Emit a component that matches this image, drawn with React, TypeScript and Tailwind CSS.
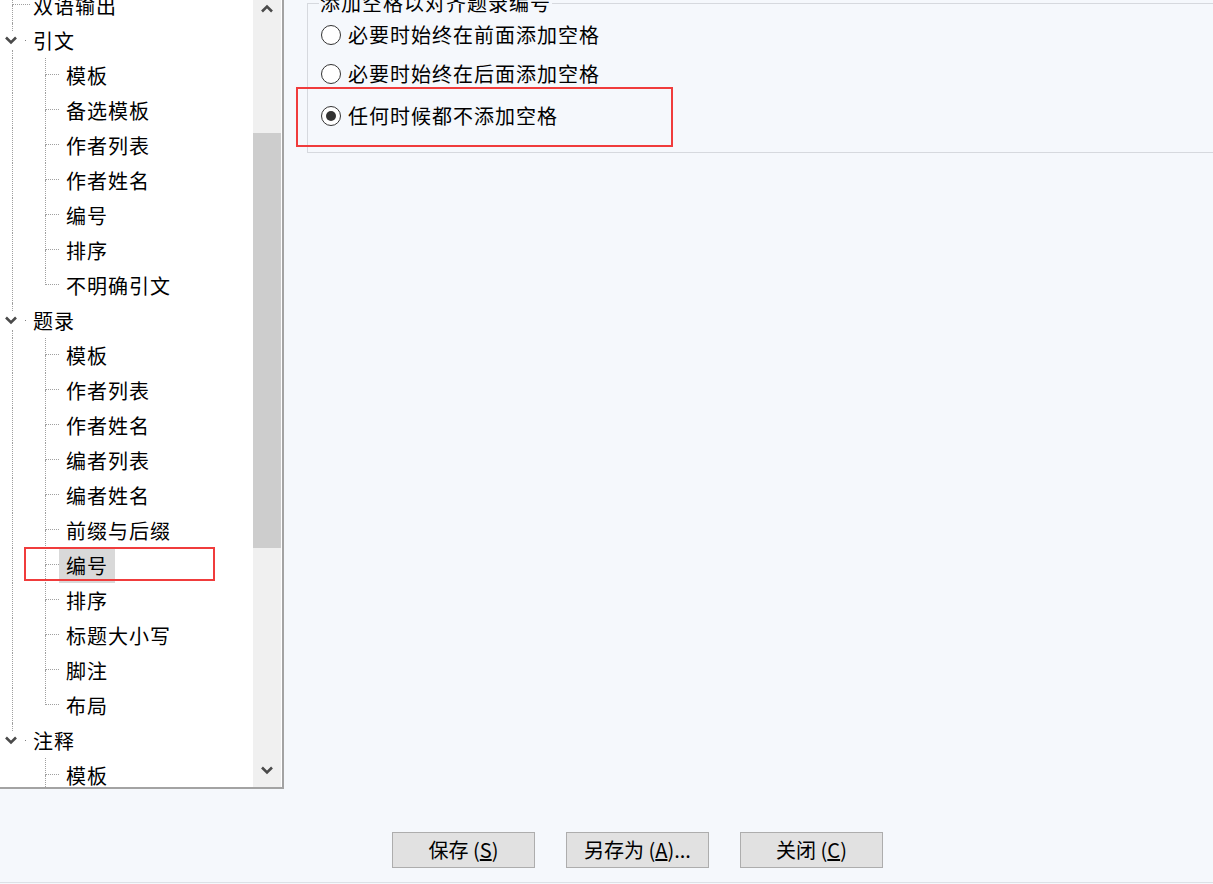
import React from "react";

type TreeNode = { label: string; children?: string[] };

const nodes: TreeNode[] = [
  { label: "双语输出" },
  {
    label: "引文",
    children: ["模板", "备选模板", "作者列表", "作者姓名", "编号", "排序", "不明确引文"],
  },
  {
    label: "题录",
    children: [
      "模板",
      "作者列表",
      "作者姓名",
      "编者列表",
      "编者姓名",
      "前缀与后缀",
      "编号",
      "排序",
      "标题大小写",
      "脚注",
      "布局",
    ],
  },
  { label: "注释", children: ["模板", "作者列表", "作者姓名"] },
];

// selected entry: 题录 > 编号
const SELECTED = { parent: "题录", child: 6 };

const Chevron = ({ up = false }: { up?: boolean }) => (
  <svg width="14" height="9" viewBox="0 0 14 9" className="shrink-0">
    <path
      d={up ? "M2 7.5 7 2.5l5 5" : "M2 1.5 7 6.5l5-5"}
      fill="none"
      stroke="#4a4a4a"
      strokeWidth="2.6"
    />
  </svg>
);

const LeafRow = ({ label, last }: { label: string; last: boolean }) => (
  <div className="flex h-[35px]">
    <div className="w-[12px] shrink-0" />
    <div className="flex w-[21px] shrink-0 flex-col">
      <div className="h-[17px] w-[18px] border-b border-l border-dotted border-[#a0a0a0]" />
      {!last && <div className="flex-1 border-l border-dotted border-[#a0a0a0]" />}
    </div>
    <span className="flex items-center">{label}</span>
  </div>
);

const HeaderRow = ({ label, last }: { label: string; last: boolean }) => (
  <div className="flex h-[35px]">
    <div className="w-[12px] shrink-0" />
    <div className="flex w-[21px] shrink-0 flex-col">
      <div className="h-[8px] border-l border-dotted border-[#a0a0a0]" />
      <div className="-ml-[8px] flex h-[19px] items-center">
        <Chevron />
        <span className="ml-[7px] h-[1px] w-[1px] bg-[#808080]" />
      </div>
      {!last && <div className="flex-1 border-l border-dotted border-[#a0a0a0]" />}
    </div>
    <span className="flex items-center">{label}</span>
  </div>
);

const ChildRow = ({
  label,
  parentLast,
  last,
  selected,
}: {
  label: string;
  parentLast: boolean;
  last: boolean;
  selected: boolean;
}) => (
  <div className="flex h-[35px]">
    <div className="w-[12px] shrink-0" />
    <div
      className={
        parentLast
          ? "w-[33px] shrink-0"
          : "w-[33px] shrink-0 border-l border-dotted border-[#a0a0a0]"
      }
    />
    <div className="flex w-[14px] shrink-0 flex-col">
      <div className="h-[17px] border-b border-l border-dotted border-[#a0a0a0]" />
      {!last && <div className="flex-1 border-l border-dotted border-[#a0a0a0]" />}
    </div>
    <span
      className={
        selected
          ? "mt-[1px] flex h-[34px] items-center bg-[#d9d9d9] px-[7px]"
          : "flex items-center px-[7px]"
      }
    >
      {label}
    </span>
  </div>
);

const Radio = ({ label, checked = false }: { label: string; checked?: boolean }) => (
  <div className="flex h-[28px] items-center gap-[7px]">
    <span className="flex h-[20px] w-[20px] items-center justify-center rounded-full border-[1.5px] border-[#333] bg-white">
      {checked && <span className="h-[10px] w-[10px] rounded-full bg-[#333]" />}
    </span>
    <span>{label}</span>
  </div>
);

export default function App() {
  return (
    <div className="relative h-[884px] w-[1213px] overflow-hidden bg-[#f5f8fc] font-['Noto_Sans_CJK_SC','Microsoft_YaHei',sans-serif] text-[20px] leading-none tracking-[1px] text-black">
      <div className="flex h-[789px]">
        {/* tree panel */}
        <div className="flex w-[284px] shrink-0 border-b-2 border-r-2 border-[#a3a3a3] bg-white">
          <div className="w-[253px] shrink-0 overflow-hidden">
            <div className="-mt-[12px]">
              {nodes.map((n, i) => {
                const last = i === nodes.length - 1;
                if (!n.children) return <LeafRow key={n.label} label={n.label} last={last} />;
                return (
                  <div key={n.label}>
                    <HeaderRow label={n.label} last={last} />
                    {n.children.map((c, j) => (
                      <ChildRow
                        key={n.label + c}
                        label={c}
                        parentLast={last}
                        last={j === n.children!.length - 1}
                        selected={n.label === SELECTED.parent && j === SELECTED.child}
                      />
                    ))}
                  </div>
                );
              })}
            </div>
          </div>
          {/* scrollbar */}
          <div className="flex w-[28px] shrink-0 flex-col bg-[#f0f0f0]">
            <div className="flex h-[17px] items-center justify-center">
              <Chevron up />
            </div>
            <div className="h-[116px]" />
            <div className="h-[415px] bg-[#cdcdcd]" />
            <div className="flex-1" />
            <div className="flex h-[34px] items-center justify-center">
              <Chevron />
            </div>
          </div>
        </div>

        {/* settings */}
        <div className="flex-1 pl-[23px] pt-[3px]">
          <div className="h-[150px] w-[920px] border border-[#d6d9de]">
            <div className="-mt-[13px] ml-[11px] w-fit bg-[#f5f8fc] px-[1px] leading-[24px]">
              添加空格以对齐题录编号
            </div>
            <div className="flex flex-col pl-[13px]">
              <div className="mt-[6px]">
                <Radio label="必要时始终在前面添加空格" />
              </div>
              <div className="mt-[11px]">
                <Radio label="必要时始终在后面添加空格" />
              </div>
              <div className="mt-[14px]">
                <Radio label="任何时候都不添加空格" checked />
              </div>
            </div>
          </div>
        </div>
      </div>

      {/* buttons */}
      <div className="flex h-[93px] gap-[31px] pl-[392px] pt-[43px]">
        <button className="flex h-[36px] w-[143px] items-center justify-center border border-[#adadad] bg-[#e1e1e1] tracking-[0px]">
          保存 (<u>S</u>)
        </button>
        <button className="flex h-[36px] w-[143px] items-center justify-center border border-[#adadad] bg-[#e1e1e1] tracking-[0px]">
          另存为 (<u>A</u>)...
        </button>
        <button className="flex h-[36px] w-[143px] items-center justify-center border border-[#adadad] bg-[#e1e1e1] tracking-[0px]">
          关闭 (<u>C</u>)
        </button>
      </div>
      <div className="h-[1px] bg-[#dde1e6]" />

      {/* annotation boxes */}
      <div className="absolute left-[24px] top-[547px] h-[34px] w-[191px] border-2 border-[#f03c3c]" />
      <div className="absolute left-[296px] top-[87px] h-[60px] w-[377px] border-2 border-[#f03c3c]" />
    </div>
  );
}
